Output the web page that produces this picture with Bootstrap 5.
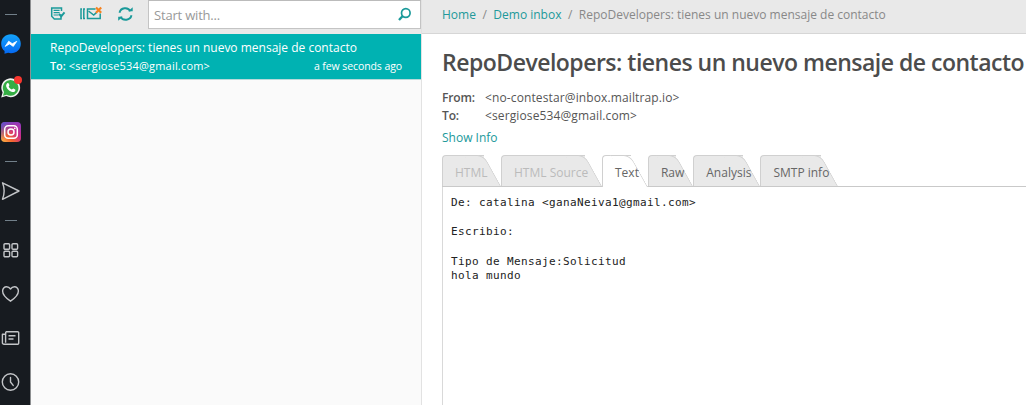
<!DOCTYPE html>
<html lang="es">
<head>
<meta charset="utf-8">
<meta name="viewport" content="width=device-width, initial-scale=1">
<title>Demo inbox</title>
<link href="https://cdn.jsdelivr.net/npm/bootstrap@5.3.0/dist/css/bootstrap.min.css" rel="stylesheet">
<style>
:root{--teal:#00b2b2;--link:#21999a;--edge:#d0d0d0;--panel:#e9e9e9}
body{font-family:"Open Sans","Noto Sans",sans-serif;font-size:12px;line-height:18px;color:#555;background:#fff}
a{color:var(--link);text-decoration:none}
.dock{width:31px;background:#171b20;border-right:1px solid #8d8f91;color:#c3c5c8;padding-top:7px}
.dock-item{height:44px;width:22px}
.dock-item.text-icon svg{display:block}
.dock-rule{height:15px;width:22px;padding-top:7px;padding-left:5px}
.dock-rule i{display:block;width:12px;height:1px;background:#72808a}
.inbox{width:391px;background:#fafafa;border-right:1px solid #e2e2e2}
.tools{height:34px;background:var(--panel);color:#1a9a9a;padding-left:19px}
.tools svg{display:block}
.finder{width:273px;height:29px;border:1px solid #c4c4c4;border-top-color:#bbb;background:#fff;padding:0 8px 0 5px}
.finder input{font-size:13px;letter-spacing:-.19px;color:#555;line-height:20px}
.finder input::placeholder{color:#999;opacity:1}
.mail{height:46px;background:var(--teal);color:#fff;border-bottom:1px solid #b9dada;padding:5px 19px 0}
.mail-to{font-size:11px;letter-spacing:.2px}
.mail-to b{font-weight:600;letter-spacing:-.1px}
.mail-time{font-size:10.5px;letter-spacing:-.09px}
.crumbs{height:34px;background:var(--panel);border-bottom:1px solid #d6d6d6;padding:6px 0 0 20px;--bs-breadcrumb-divider:"/";--bs-breadcrumb-item-padding-x:6.5px;--bs-breadcrumb-font-size:12px;--bs-breadcrumb-divider-color:#888;--bs-breadcrumb-item-active-color:#888}
.subject{font-size:23px;line-height:30px;font-weight:600;letter-spacing:-.504px;color:#4c4c4c;padding-top:13px}
.meta-key{width:43px;font-weight:600;letter-spacing:-.12px}
.meta-val{letter-spacing:.12px}
.tabs{height:32px;border-bottom:1px solid #c9c9c9}
.tab{position:relative;height:31px;line-height:19px;padding:8px 0 0 13px;color:#666;margin-right:9px;z-index:1}
.tab::before,.tab::after{content:"";position:absolute;top:0;bottom:0;background:var(--panel);border-top:1px solid var(--edge);z-index:-1}
.tab::before{left:0;right:8px;border-left:1px solid var(--edge);border-top-left-radius:4px}
.tab::after{right:-9px;width:20px;border-right:1.5px solid var(--edge);border-top-right-radius:7px;transform:skewX(29deg);transform-origin:100% 100%;right:-9px}
.tab.off{color:#bbb}
.tab.on{height:32px}
.tab.on::before,.tab.on::after{background:#fff}
.tab.on::after{bottom:0}
.w1{width:50px;z-index:4}.w2{width:92px;z-index:3}.w3{width:49px;z-index:6;margin-right:0}
.plain{border-left:1px solid #d9d9d9;padding:9px 8px;font:11px/14.67px "DejaVu Sans Mono",monospace;letter-spacing:.38px;color:#222;overflow:hidden}
</style>
</head>
<body>
<div class="d-flex vh-100 overflow-hidden">
  <nav class="dock flex-shrink-0 d-flex flex-column">
    <div class="dock-rule"><i></i></div>
    <a class="dock-item d-flex align-items-center justify-content-center" href="#" aria-label="Messenger"><svg width="20" height="20" viewBox="0 0 20 20"><defs><linearGradient id="ms" x1="0" y1="0" x2="0" y2="1"><stop offset="0" stop-color="#14a4fb"/><stop offset="1" stop-color="#0568f2"/></linearGradient></defs><path d="M10 .2c5.7 0 9.8 4.100 9.800 9.500s-4.100 9.500-9.800 9.500c-1 0-2-.1-2.900-.4L3.500 19.800l.100-2.700C1.400 15.400.2 12.800.2 9.700.2 4.300 4.300.2 10 .2z" fill="url(#ms)"/><path d="M4.200 12.400l3.500-5.200 3.600 2.500 4.500-2.400-3.500 5.100-3.700-2.500z" fill="#fff" stroke="#fff" stroke-width=".8" stroke-linejoin="round"/></svg></a>
    <a class="dock-item d-flex align-items-center justify-content-center position-relative" href="#" aria-label="WhatsApp"><svg width="22" height="24" viewBox="0 0 22 24"><path d="M1.200 21.500l1.400-5A9.400 9.400 0 1 1 6.200 20z" fill="#f1f3f1"/><path d="M3 19.700l1-3.700a7.800 7.800 0 1 1 2.800 2.700z" fill="#35ae45"/><path d="M7.200 7.300c.5-.5 1.300-.4 1.500.2l.7 1.600c.2.500-.8 1.200-.6 1.600.6 1.300 1.800 2.300 3 2.800.5.200 1-1.200 1.600-.9l1.700.9c.5.300.3 1.200-.1 1.700-.9 1-2.200 1.100-3.500.6-2.500-.9-4.300-2.600-5.200-5-.4-1.200-.1-2.600.9-3.500z" fill="#fff"/><circle cx="18" cy="4" r="4" fill="#f8372f"/></svg></a>
    <a class="dock-item d-flex align-items-center justify-content-center" href="#" aria-label="Instagram"><svg width="20" height="20" viewBox="0 0 20 20"><defs><linearGradient id="ig" x1="0" y1="1" x2="1" y2="0"><stop offset="0" stop-color="#fdbd4c"/><stop offset=".3" stop-color="#f4662f"/><stop offset=".6" stop-color="#cf2e86"/><stop offset="1" stop-color="#8a3ac8"/></linearGradient><linearGradient id="ib" x1="0" y1="0" x2=".5" y2=".5"><stop offset="0" stop-color="#4c55dc"/><stop offset="1" stop-color="#4c55dc" stop-opacity="0"/></linearGradient></defs><rect width="20" height="20" rx="4" fill="url(#ig)"/><rect width="20" height="20" rx="4" fill="url(#ib)"/><g fill="none" stroke="#fff" stroke-width="1.500"><rect x="3.700" y="3.700" width="12.600" height="12.600" rx="3.500"/><circle cx="10" cy="10" r="3"/></g><circle cx="13.800" cy="6.300" r=".9" fill="#fff"/></svg></a>
    <div class="dock-rule"><i></i></div>
    <a class="dock-item d-flex align-items-center justify-content-center text-reset" href="#" aria-label="Send"><svg width="20" height="20" viewBox="0 0 20 20" fill="none" stroke="currentColor" stroke-width="1.400" stroke-linejoin="round"><path d="M1.500 1.800L18 10 1.500 18.300c2.200-5.500 2.200-11 0-16.500z"/></svg></a>
    <div class="dock-rule"><i></i></div>
    <a class="dock-item d-flex align-items-center justify-content-center text-reset" href="#" aria-label="Apps"><svg width="18" height="18" viewBox="0 0 18 18" fill="none" stroke="currentColor" stroke-width="1.400"><rect x="2" y="2.700" width="5.600" height="5.600" rx="1"/><rect x="10" y="2.700" width="5.600" height="5.600" rx="1"/><rect x="2" y="10.200" width="5.600" height="5.600" rx="1"/><rect x="10" y="10.200" width="5.600" height="5.600" rx="1"/></svg></a>
    <a class="dock-item d-flex align-items-center justify-content-center text-reset" href="#" aria-label="Favorites"><svg width="20" height="20" viewBox="0 0 20 20" fill="none" stroke="currentColor" stroke-width="1.400" stroke-linejoin="round"><path d="M9.500 5C8.500 3.500 7.200 2.700 5.600 2.700c-2.300 0-4 1.900-4 4.300 0 4.500 5.700 8.700 7.900 10.200 2.200-1.500 7.900-5.700 7.900-10.200 0-2.400-1.700-4.300-4-4.300-1.600 0-2.900.8-3.900 2.300z"/></svg></a>
    <a class="dock-item d-flex align-items-center justify-content-center text-reset" href="#" aria-label="News"><svg width="20" height="20" viewBox="0 0 20 20" fill="none" stroke="currentColor" stroke-width="1.400" stroke-linejoin="round"><path d="M4.800 3.700h11.900a1 1 0 0 1 1 1v10.600a1 1 0 0 1-1 1H3a1.600 1.600 0 0 1-1.600-1.600V6.300h3.200v8.400M4.700 6.300V3.700M7.500 7.800h7M7.500 11h5"/></svg></a>
    <a class="dock-item d-flex align-items-center justify-content-center text-reset" href="#" aria-label="History"><svg width="20" height="20" viewBox="0 0 20 20" fill="none" stroke="currentColor" stroke-width="1.400" stroke-linecap="round"><circle cx="9.500" cy="10" r="8.200"/><path d="M9.500 5.400V10l2.700 3.400"/></svg></a>
  </nav>

  <section class="inbox flex-shrink-0">
    <div class="tools d-flex align-items-start">
      <svg class="flex-shrink-0" width="98" height="28" viewBox="0 0 98 28" fill="none" stroke="currentColor" stroke-width="1.500">
        <path d="M11 14.200V19H4.300L1.700 16.300V7.900H11.500v3"/><path d="M3.600 10.400h6M3.600 12.700h6M3.600 15h5" stroke-width="1.200"/><path d="M9 14l2.300 2.300 3.200-4" stroke-width="1.900"/>
        <path d="M32 9.100h-1v9.400h1M35 9.100h-1.200v9.400H35" stroke-width="1.500"/><path d="M45.500 9.100H37.500v9.400H50.200v-5"/><path d="M38.500 11l5.200 4 3-2.600" stroke-width="1.500"/><path d="M46 7.500l5.200 5.200M51.200 7.500L46 12.700" stroke="#f5821f" stroke-width="2.200"/>
        <path d="M69.500 12.700a5.900 5.600 0 0 1 11-1.500M81.500 15.300a5.900 5.600 0 0 1-11 1.500" stroke-width="1.900"/><path d="M78.200 11.200h4.500V7.300zM72.700 16.700h-4.500v4z" fill="currentColor" stroke="none"/>
      </svg>
      <div class="finder d-flex align-items-center">
        <input class="form-control border-0 p-0 bg-transparent rounded-0 shadow-none" type="text" placeholder="Start with..." aria-label="Start with">
        <svg class="flex-shrink-0" width="15" height="15" viewBox="0 0 15 15" fill="none" stroke="currentColor"><circle cx="8.800" cy="6" r="4.300" stroke-width="1.700"/><path d="M5.700 9L2 13" stroke-width="2.400"/></svg>
      </div>
    </div>
    <div class="mail">
      <div class="text-nowrap">RepoDevelopers: tienes un nuevo mensaje de contacto</div>
      <div class="d-flex justify-content-between">
        <span class="mail-to"><b>To:</b> &lt;sergiose534@gmail.com&gt;</span>
        <span class="mail-time">a few seconds ago</span>
      </div>
    </div>
  </section>

  <main class="flex-grow-1 overflow-hidden d-flex flex-column">
    <ol class="breadcrumb crumbs mb-0 flex-nowrap text-nowrap flex-shrink-0">
      <li class="breadcrumb-item"><a href="#">Home</a></li>
      <li class="breadcrumb-item"><a href="#">Demo inbox</a></li>
      <li class="breadcrumb-item active">RepoDevelopers: tienes un nuevo mensaje de contacto</li>
    </ol>
    <div class="flex-grow-1 d-flex flex-column ps-3 ms-1">
      <h1 class="subject text-nowrap mb-0">RepoDevelopers: tienes un nuevo mensaje de contacto</h1>
      <div class="d-flex mt-2 pt-1"><span class="meta-key">From:</span><span class="meta-val">&lt;no-contestar@inbox.mailtrap.io&gt;</span></div>
      <div class="d-flex"><span class="meta-key">To:</span><span class="meta-val">&lt;sergiose534@gmail.com&gt;</span></div>
      <a class="d-block mt-1" href="#">Show Info</a>
      <div class="tabs d-flex flex-shrink-0 mt-2">
        <a class="tab off w1" href="#">HTML</a>
        <a class="tab off w2" href="#">HTML Source</a>
        <a class="tab on" href="#">Text</a>
        <a class="tab" href="#">Raw</a>
        <a class="tab" href="#">Analysis</a>
        <a class="tab" href="#">SMTP info</a>
      </div>
      <pre class="plain flex-grow-1 mb-0">De: catalina &lt;ganaNeiva1@gmail.com&gt;

Escribio:

Tipo de Mensaje:Solicitud
hola mundo</pre>
    </div>
  </main>
</div>
<script src="https://cdn.jsdelivr.net/npm/bootstrap@5.3.0/dist/js/bootstrap.bundle.min.js"></script>
</body>
</html>
